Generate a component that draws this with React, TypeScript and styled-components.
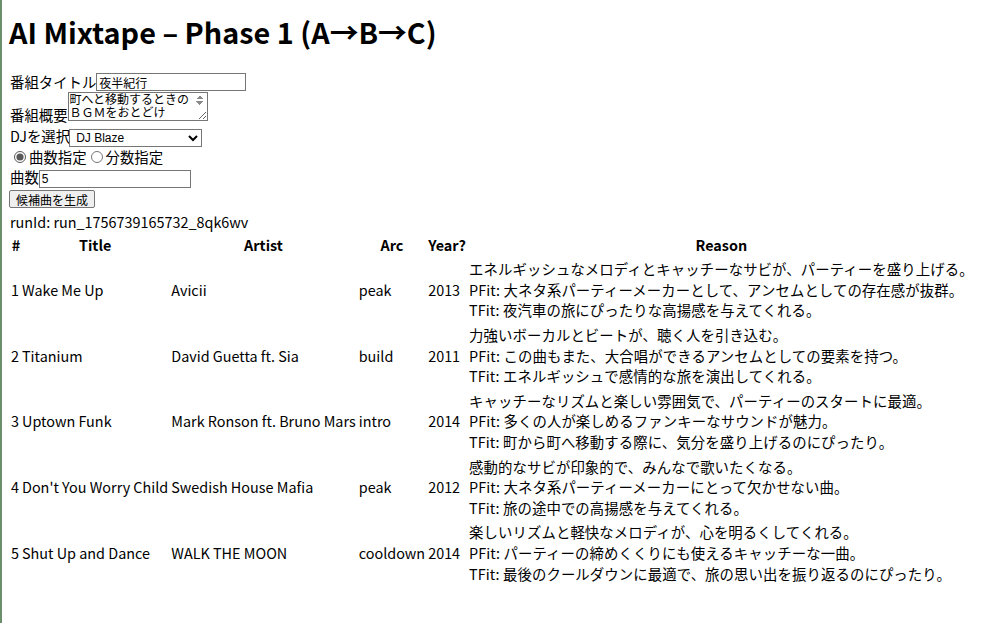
import React, { useEffect, useRef } from 'react';
import styled, { createGlobalStyle } from 'styled-components';

const GlobalStyle = createGlobalStyle`
  html {
    min-height: 100%;
    background: #ffffff;
    box-shadow: inset 2px 0 0 #6b8e6b;
  }
  body {
    margin: 11px 8px 8px;
    font-family: 'Noto Sans CJK JP', 'Noto Sans', sans-serif;
    font-size: 14.4px;
    line-height: 20.6px;
    color: #000;
  }
`;

const Top = styled.div`
  padding-left: 2px;
`;

const Heading = styled.h1`
  font-size: 28.8px;
  line-height: 41.7px;
  font-weight: 700;
  margin: 0 0 19px -1px;
`;

const FormRow = styled.div<{ $gap?: number }>`
  display: block;
  margin-top: ${(p) => p.$gap ?? 0}px;
`;

const controlFont = `12px 'Liberation Sans', 'Noto Sans CJK JP', Arial, sans-serif`;

const TextInput = styled.input<{ $w: number }>`
  font: ${controlFont};
  width: ${(p) => p.$w}px;
  height: 18px;
  box-sizing: border-box;
  padding: 1px 2px;
  margin: 0;
  border: 1px solid #767676;
  border-radius: 0;
  color: #000;
`;

const arrow = '#8a8a8a';

const TextArea = styled.textarea`
  font: 12px/13px 'Liberation Mono', 'Noto Sans CJK JP', monospace;
  width: 140px;
  height: 29px;
  box-sizing: border-box;
  padding: 1px 14px 1px 1px;
  margin: 0;
  border: 1px solid #767676;
  color: #000;
  overflow: hidden;
  background-color: #ffffff;
  background-image:
    linear-gradient(to top left, ${arrow} 50%, transparent 50%),
    linear-gradient(to top right, ${arrow} 50%, transparent 50%),
    linear-gradient(to bottom left, ${arrow} 50%, transparent 50%),
    linear-gradient(to bottom right, ${arrow} 50%, transparent 50%);
  background-size: 4px 4px;
  background-repeat: no-repeat;
  background-position:
    right 7px top 2px,
    right 3px top 2px,
    right 7px top 8px,
    right 3px top 8px;
`;

const Select = styled.select`
  font: ${controlFont};
  width: 133px;
  height: 18px;
  box-sizing: border-box;
  margin: 0 0 0 -1px;
  padding: 0 2px;
  border: 1px solid #767676;
  border-radius: 0;
  background: #fff;
  color: #000;
`;

const Radio = styled.input`
  width: 12px;
  height: 12px;
  margin: 3px 3px 0 4px;
  accent-color: #595959;
`;

const Button = styled.button`
  font: ${controlFont};
  height: 18px;
  padding: 0 6px;
  margin: 0 0 0 -1px;
  border: 1px solid #767676;
  border-radius: 2px;
  background: #efefef;
  color: #000;
`;

const RunId = styled.div`
  margin-top: 2px;
`;

const Table = styled.table`
  border-spacing: 2px;
  border-collapse: separate;
  font-size: 14.4px;
  margin-top: -1px;
`;

const Th = styled.th<{ $narrow?: boolean }>`
  padding: 1px 0 1px 1px;
  font-weight: 700;
  text-align: center;
  letter-spacing: ${(p) => (p.$narrow ? '-2px' : 'normal')};
`;

const Td = styled.td`
  padding: 1px 0 1px 1px;
  vertical-align: middle;
  white-space: nowrap;
`;

const ReasonCell = styled(Td)`
  letter-spacing: 0.09px;
`;

const ReasonLine = styled.div``;

type Track = {
  n: number;
  title: string;
  artist: string;
  arc: string;
  year: number;
  reason: string;
  pfit: string;
  tfit: string;
};

const tracks: Track[] = [
  {
    n: 1,
    title: 'Wake Me Up',
    artist: 'Avicii',
    arc: 'peak',
    year: 2013,
    reason: 'エネルギッシュなメロディとキャッチーなサビが、パーティーを盛り上げる。',
    pfit: '大ネタ系パーティーメーカーとして、アンセムとしての存在感が抜群。',
    tfit: '夜汽車の旅にぴったりな高揚感を与えてくれる。',
  },
  {
    n: 2,
    title: 'Titanium',
    artist: 'David Guetta ft. Sia',
    arc: 'build',
    year: 2011,
    reason: '力強いボーカルとビートが、聴く人を引き込む。',
    pfit: 'この曲もまた、大合唱ができるアンセムとしての要素を持つ。',
    tfit: 'エネルギッシュで感情的な旅を演出してくれる。',
  },
  {
    n: 3,
    title: 'Uptown Funk',
    artist: 'Mark Ronson ft. Bruno Mars',
    arc: 'intro',
    year: 2014,
    reason: 'キャッチーなリズムと楽しい雰囲気で、パーティーのスタートに最適。',
    pfit: '多くの人が楽しめるファンキーなサウンドが魅力。',
    tfit: '町から町へ移動する際に、気分を盛り上げるのにぴったり。',
  },
  {
    n: 4,
    title: "Don't You Worry Child",
    artist: 'Swedish House Mafia',
    arc: 'peak',
    year: 2012,
    reason: '感動的なサビが印象的で、みんなで歌いたくなる。',
    pfit: '大ネタ系パーティーメーカーにとって欠かせない曲。',
    tfit: '旅の途中での高揚感を与えてくれる。',
  },
  {
    n: 5,
    title: 'Shut Up and Dance',
    artist: 'WALK THE MOON',
    arc: 'cooldown',
    year: 2014,
    reason: '楽しいリズムと軽快なメロディが、心を明るくしてくれる。',
    pfit: 'パーティーの締めくくりにも使えるキャッチーな一曲。',
    tfit: '最後のクールダウンに最適で、旅の思い出を振り返るのにぴったり。',
  },
];

export default function App() {
  const taRef = useRef<HTMLTextAreaElement>(null);
  useEffect(() => {
    if (taRef.current) taRef.current.scrollTop = 12;
  }, []);

  return (
    <>
      <GlobalStyle />
      <Top>
        <Heading>AI Mixtape – Phase 1 (A→B→C)</Heading>
        <FormRow>
          <label>
            番組タイトル
            <TextInput $w={150} defaultValue="夜半紀行" />
          </label>
        </FormRow>
        <FormRow>
          <label>
            番組概要
            <TextArea
              ref={taRef}
              defaultValue="夜汽車に乗って町から町へと移動するときのＢＧＭをおとどけ"
            />
          </label>
        </FormRow>
        <FormRow>
          <label>
            DJを選択
            <Select defaultValue="DJ Blaze">
              <option>DJ Blaze</option>
              <option>DJ Luna</option>
            </Select>
          </label>
        </FormRow>
        <FormRow>
          <label>
            <Radio type="radio" name="mode" defaultChecked />
            曲数指定
          </label>
          <label>
            <Radio type="radio" name="mode" />
            分数指定
          </label>
        </FormRow>
        <FormRow>
          <label>
            曲数
            <TextInput $w={152} defaultValue="5" />
          </label>
        </FormRow>
        <FormRow $gap={1}>
          <Button>候補曲を生成</Button>
        </FormRow>
        <RunId>runId: run_1756739165732_8qk6wv</RunId>
      </Top>
      <Table>
        <thead>
          <tr>
            <Th $narrow>#</Th>
            <Th>Title</Th>
            <Th>Artist</Th>
            <Th>Arc</Th>
            <Th>Year?</Th>
            <Th>Reason</Th>
          </tr>
        </thead>
        <tbody>
          {tracks.map((t) => (
            <tr key={t.n}>
              <Td>{t.n}</Td>
              <Td>{t.title}</Td>
              <Td>{t.artist}</Td>
              <Td>{t.arc}</Td>
              <Td>{t.year}</Td>
              <ReasonCell>
                <ReasonLine>{t.reason}</ReasonLine>
                <ReasonLine>PFit: {t.pfit}</ReasonLine>
                <ReasonLine>TFit: {t.tfit}</ReasonLine>
              </ReasonCell>
            </tr>
          ))}
        </tbody>
      </Table>
    </>
  );
}
